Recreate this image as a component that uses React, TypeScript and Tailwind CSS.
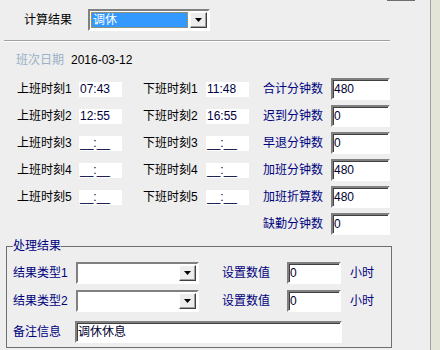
import React from 'react';

const font = "font-['Liberation_Sans','Noto_Sans_CJK_SC',sans-serif]";

function DropButton() {
  return (
    <div className="flex h-full w-[17px] items-center justify-center border border-t-white border-l-white border-b-[#404040] border-r-[#404040] bg-[#ecedec] shadow-[inset_-1px_-1px_0_#a0a0a0]">
      <svg width="7" height="4" viewBox="0 0 7 4">
        <path d="M0 0h7L3.5 4z" fill="#000" />
      </svg>
    </div>
  );
}

function Combo({ value, selected, width }: { value?: string; selected?: boolean; width: string }) {
  return (
    <div className={`flex h-[22px] ${width} border-2 border-t-[#808080] border-l-[#808080] border-b-white border-r-white bg-white p-px`}>
      <div className="flex flex-1 items-center pr-[2px]">
        {selected ? (
          <div className="flex h-full flex-1 items-center bg-[#3399ff] pl-[2px] text-white outline-1 outline-dotted outline-[#e08a00] -outline-offset-1">
            {value}
          </div>
        ) : (
          <span className="pl-[2px]">{value}</span>
        )}
      </div>
      <DropButton />
    </div>
  );
}

function Field({ value, width }: { value: string; width: string }) {
  return (
    <div className={`flex h-[22px] ${width} items-center border-2 border-t-[#808080] border-l-[#808080] border-b-white border-r-white bg-white pl-[1px] text-[#000030] shadow-[inset_1px_1px_0_#404040]`}>
      {value}
    </div>
  );
}

function TimeBox({ value }: { value: string }) {
  return (
    <div className="flex h-[15px] w-[43px] items-center bg-white pl-[1px] text-[#000040]">
      {value}
    </div>
  );
}

const rows = [
  { n: 1, on: '07:43', off: '11:48', label: '合计分钟数', value: '480' },
  { n: 2, on: '12:55', off: '16:55', label: '迟到分钟数', value: '0' },
  { n: 3, on: '__:__', off: '__:__', label: '早退分钟数', value: '0' },
  { n: 4, on: '__:__', off: '__:__', label: '加班分钟数', value: '480' },
  { n: 5, on: '__:__', off: '__:__', label: '加班折算数', value: '480' },
];

export default function App() {
  return (
    <div className={`flex h-[350px] w-[440px] overflow-hidden bg-[#edeeed] text-[12px] leading-[14px] text-black ${font}`}>
      <div className="w-[431px] border-r border-[#a0a0a0]">
        {/* cut-off control at the top edge */}
        <div className="h-px">
          <div className="ml-[387px] h-px w-[28px] bg-[#6f6f6f]" />
        </div>

        <div className="mt-[8px] flex h-[22px] items-center pl-[24px]">
          <span className="w-[64px]">计算结果</span>
          <Combo value="调休" selected width="w-[122px]" />
        </div>

        <div className="mt-[9px] ml-[4px] w-[386px] border-t border-b border-t-[#a0a0a0] border-b-white" />

        <div className="mt-[8px] flex h-[20px] items-center pl-[16px]">
          <span className="w-[55px] text-[#9bb0c9]">班次日期</span>
          <span>2016-03-12</span>
        </div>

        <div className="mt-[8px]">
          {rows.map((r) => (
            <div key={r.n} className="flex h-[27px] items-start pl-[17px]">
              <div className="flex h-[22px] items-center">
                <span className="w-[62px]">上班时刻{r.n}</span>
                <TimeBox value={r.on} />
                <span className="ml-[21px] w-[63px]">下班时刻{r.n}</span>
                <TimeBox value={r.off} />
                <span className="ml-[14px] w-[68px] text-[#000080]">{r.label}</span>
                <Field value={r.value} width="w-[59px]" />
              </div>
            </div>
          ))}
          <div className="flex h-[26px] items-start pl-[263px]">
            <div className="flex h-[22px] items-center">
              <span className="w-[68px] text-[#000080]">缺勤分钟数</span>
              <Field value="0" width="w-[59px]" />
            </div>
          </div>
        </div>

        <fieldset className="ml-[6px] w-[386px] border border-[#6f6f6f] pl-[6px] pb-[4px]">
          <legend className="px-0 leading-[14px] text-[#000080]">处理结果</legend>
          <div className="mt-[9px] flex h-[22px] items-center text-[#000080]">
            <span className="w-[63px]">结果类型1</span>
            <Combo width="w-[123px]" />
            <span className="ml-[23px] w-[65px]">设置数值</span>
            <Field value="0" width="w-[54px]" />
            <span className="ml-[9px]">小时</span>
          </div>
          <div className="mt-[6px] flex h-[22px] items-center text-[#000080]">
            <span className="w-[63px]">结果类型2</span>
            <Combo width="w-[123px]" />
            <span className="ml-[23px] w-[65px]">设置数值</span>
            <Field value="0" width="w-[54px]" />
            <span className="ml-[9px]">小时</span>
          </div>
          <div className="mt-[9px] flex h-[22px] items-center">
            <span className="w-[62px] text-[#000080]">备注信息</span>
            <Field value="调休休息" width="w-[267px]" />
          </div>
        </fieldset>
      </div>
      <div className="flex-1 bg-[#e3e6d7]" />
    </div>
  );
}
